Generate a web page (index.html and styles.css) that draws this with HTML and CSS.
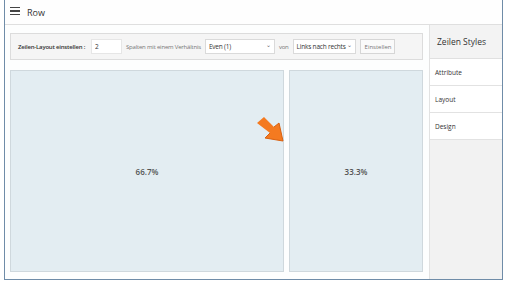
FILE: index.html
```html
<!DOCTYPE html>
<html lang="de">
<head>
  <meta charset="UTF-8" />
  <meta name="viewport" content="width=device-width, initial-scale=1" />
  <title>Row</title>
  <link rel="stylesheet" href="styles.css">
</head>
<body>
<div class="frame">
  <header class="topbar">
    <span class="menu-icon" aria-hidden="true"><i></i><i></i><i></i></span>
    <span class="title">Row</span>
  </header>
  <div class="workspace">
    <main class="editor">
      <div class="toolbar">
        <label class="tb-label">Zeilen-Layout einstellen :</label>
        <input class="tb-count" type="text" value="2" />
        <span class="tb-text">Spalten mit einem Verhältnis</span>
        <div class="tb-select ratio">Even (1) <span class="caret">&#8964;</span></div>
        <span class="tb-text">von</span>
        <div class="tb-select dir">Links nach rechts <span class="caret">&#8964;</span></div>
        <button class="tb-btn">Einstellen</button>
      </div>
      <div class="columns">
        <div class="col wide">66.7%</div>
        <div class="col narrow">33.3%</div>
        <svg class="arrow" width="34" height="30" viewBox="0 0 34 30" aria-hidden="true">
          <path d="M2 8 L9 2 L19 12 L24 8 L28 26 L10 23 L15 18 Z" fill="#f47a20"/>
          <path d="M19 12 L24 8 L28 26 L10 23 L15 18" fill="none" stroke="#d9600f" stroke-width="1"/>
        </svg>
      </div>
    </main>
    <aside class="sidebar">
      <div class="side-head">Zeilen Styles</div>
      <a class="side-item">Attribute</a>
      <a class="side-item">Layout</a>
      <a class="side-item">Design</a>
    </aside>
  </div>
</div>
</body>
</html>
```
FILE: styles.css
```css
html, body {
  margin: 0;
  background: #ffffff;
}
body {
  font-family: 'Open Sans', 'Noto Sans', sans-serif;
  color: #333;
  width: 509px;
  height: 283px;
  overflow: hidden;
}
.frame {
  margin: 0 6px 0 4px;
  height: 279px;
  border: 1px solid #6f8ca8;
  border-top: none;
  display: flex;
  flex-direction: column;
  background: #fdfdfd;
}
.topbar {
  height: 24px;
  display: flex;
  align-items: center;
  gap: 7px;
  padding: 0 0 0 5px;
  border-bottom: 1px solid #dfdfdf;
  background: #fefefe;
}
.menu-icon {
  display: flex;
  flex-direction: column;
  gap: 2px;
  width: 10px;
  margin-top: -2px;
}
.menu-icon i {
  display: block;
  height: 1.5px;
  background: #444;
}
.title {
  font-size: 9px;
  color: #333;
  margin-top: 0;
}
.workspace {
  flex: 1;
  display: flex;
}
.editor {
  flex: 1;
  position: relative;
  padding: 8px 6px 7px 5px;
  display: flex;
  flex-direction: column;
  gap: 10px;
  background: #fdfefe;
}
.toolbar {
  height: 27px;
  box-sizing: border-box;
  border: 1px solid #dcdcdc;
  background: #f5f5f5;
  display: flex;
  align-items: center;
  padding: 0 0 0 7px;
  font-size: 6px;
  letter-spacing: -0.2px;
  white-space: nowrap;
}
.tb-label {
  font-weight: 600;
  color: #333;
  width: 73px;
}
.tb-count {
  width: 31px;
  height: 15px;
  box-sizing: border-box;
  border: 1px solid #e6e6e6;
  background: #fff;
  font: inherit;
  font-size: 6.5px;
  padding: 0 3px;
  color: #333;
  margin-right: 4px;
}
.tb-text {
  color: #777;
  margin-right: 4px;
}
.tb-select {
  height: 15px;
  box-sizing: border-box;
  border: 1px solid #dadada;
  background: #fff;
  display: flex;
  align-items: center;
  justify-content: space-between;
  padding: 0 3px;
  color: #333;
  font-size: 6.5px;
  margin-right: 4px;
}
.tb-select.ratio { width: 70px; }
.tb-select.dir { width: 63px; }
.caret {
  font-size: 6px;
  color: #666;
  margin-top: -3px;
}
.tb-btn {
  height: 15px;
  border: 1px solid #d6d6d6;
  background: #fafafa;
  font: inherit;
  color: #777;
  padding: 0 4px;
  width: 35px;
}
.columns {
  flex: 1;
  display: flex;
  gap: 5px;
  position: relative;
}
.col {
  border: 1px solid #cfd8dd;
  background: #e3edf2;
  display: flex;
  align-items: center;
  justify-content: center;
  font-size: 8px;
  font-weight: 600;
  color: #555;
}
.col.wide { flex: 276; }
.col.narrow { flex: 134; }
.arrow {
  position: absolute;
  left: 245px;
  top: 45px;
}
.sidebar {
  width: 72px;
  background: #f2f2f2;
  border-left: 1px solid #e2e2e2;
  display: flex;
  flex-direction: column;
}
.side-head {
  height: 33px;
  display: flex;
  align-items: center;
  padding-left: 7px;
  font-size: 8.5px;
  color: #333;
  background: #f3f3f3;
  border-bottom: 1px solid #e0e0e0;
}
.side-item {
  height: 26px;
  display: flex;
  align-items: center;
  padding-left: 5px;
  font-size: 6.5px;
  color: #333;
  background: #fff;
  border-bottom: 1px solid #e2e2e2;
}
```
